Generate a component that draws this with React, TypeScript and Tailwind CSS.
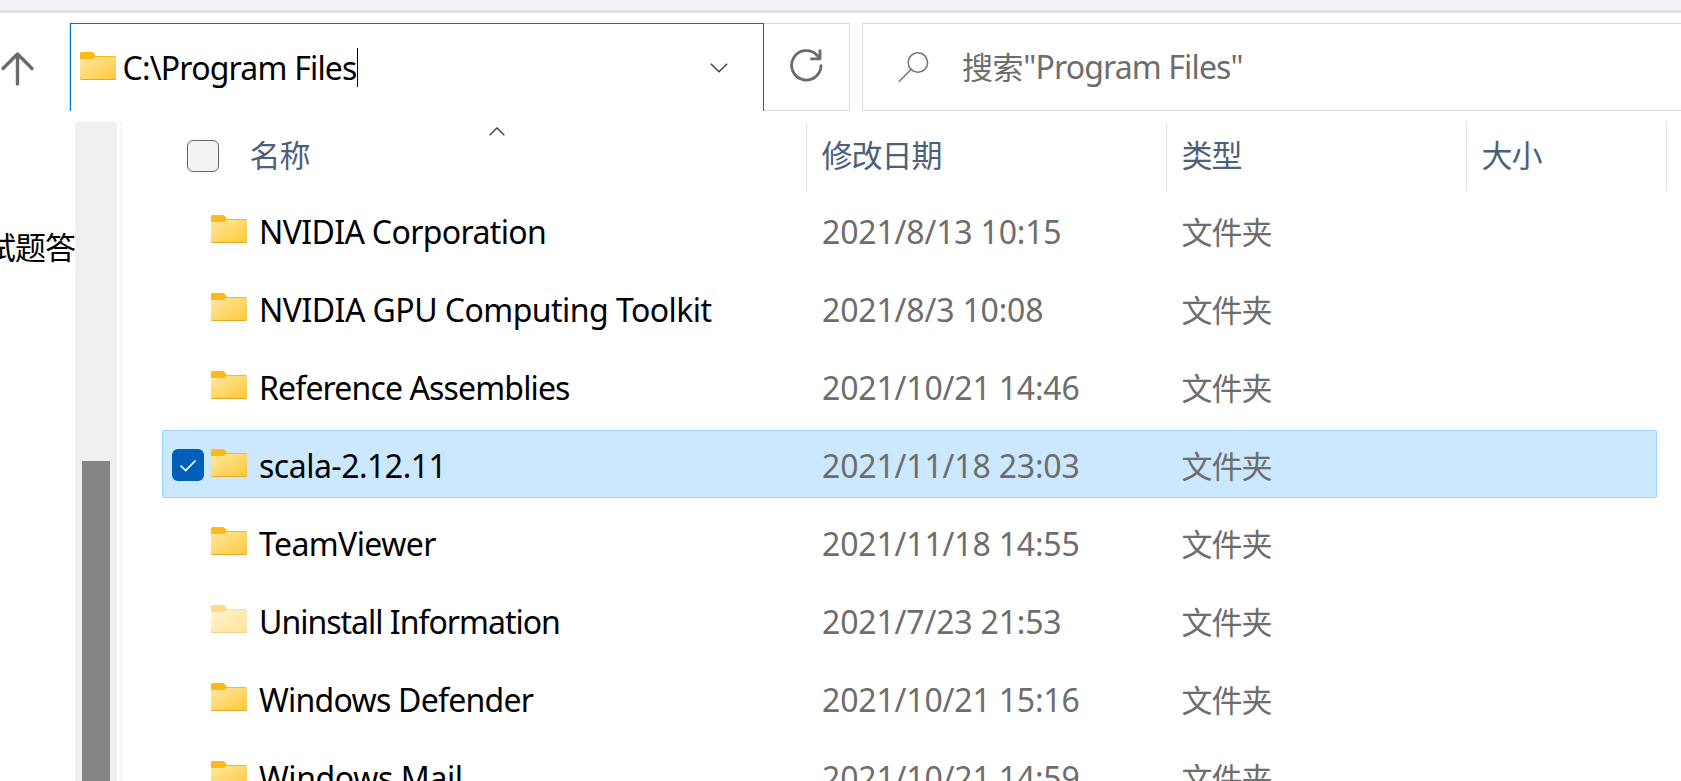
const rows = [
  { name: "NVIDIA Corporation", date: "2021/8/13 10:15", track: "tracking-[-0.64px]" },
  { name: "NVIDIA GPU Computing Toolkit", date: "2021/8/3 10:08", track: "tracking-[-0.54px]" },
  { name: "Reference Assemblies", date: "2021/10/21 14:46", track: "tracking-[-0.86px]" },
  { name: "scala-2.12.11", date: "2021/11/18 23:03", track: "tracking-[-0.5px]", selected: true },
  { name: "TeamViewer", date: "2021/11/18 14:55", track: "tracking-[-0.6px]" },
  { name: "Uninstall Information", date: "2021/7/23 21:53", track: "tracking-[-1px]", faded: true },
  { name: "Windows Defender", date: "2021/10/21 15:16", track: "tracking-[-0.74px]" },
  { name: "Windows Mail", date: "2021/10/21 14:59", track: "tracking-[-0.4px]" },
];

function Folder({ faded }: { faded?: boolean }) {
  return (
    <svg width="36" height="28" viewBox="0 0 36 28" className={faded ? "shrink-0 opacity-50" : "shrink-0"}>
      <defs>
        <linearGradient id="folderFront" x1="0" y1="0" x2="1" y2="1">
          <stop offset="0" stopColor="#ffe8a2" />
          <stop offset="1" stopColor="#ffc937" />
        </linearGradient>
      </defs>
      <path d="M0 1.5Q0 0 1.5 0H11.5Q13 0 14 1.2L15.8 4H34.5Q36 4 36 5.5V9H0Z" fill="#fcb91a" />
      <path d="M0 7H12Q13.3 7 14.2 6.2L15.5 5H35.3Q36 5 36 6V26.5Q36 28 34.5 28H1.5Q0 28 0 26.5Z" fill="url(#folderFront)" />
      <path d="M0 26.2Q0 27.5 1.5 27.5H34.5Q36 27.5 36 26.2" fill="none" stroke="#e9a820" strokeWidth="1" />
    </svg>
  );
}

function Column({ title, className }: { title: string; className: string }) {
  return (
    <div className={`shrink-0 border-l border-[#e2e2e2] pt-[11px] pl-[14.5px] leading-[44px] ${className}`}>{title}</div>
  );
}

export default function App() {
  return (
    <div className="flex h-[781px] w-[1681px] flex-col overflow-hidden bg-white font-['Noto_Sans','Noto_Sans_CJK_SC',sans-serif] text-[32px] whitespace-pre text-black">
      <div className="h-[13px] shrink-0 border-b-[3px] border-[#dfe2e8] bg-[#f0f3f8]" />

      <div className="flex h-[98px] shrink-0 pt-[10px]">
        <div className="w-[69px] shrink-0 pt-[28px]">
          <svg width="36" height="36" viewBox="0 0 36 36" fill="none" stroke="#6b6b6b" strokeWidth="3.4" strokeLinecap="round" strokeLinejoin="round">
            <path d="M17.5 33V3.2M3 17.5L17.5 3L32 17.5" />
          </svg>
        </div>
        <div className="flex w-[695px] shrink-0 border-l border-[#d9e3ea]">
          <div className="flex flex-1 border-x border-t border-[#0073cf] pl-[9px]">
            <div className="pt-[28px]">
              <Folder />
            </div>
            <div className="mt-[23px] ml-[6.5px] h-[42px] text-[32px] leading-[42px] tracking-[-0.8px]">C:\Program Files</div>
            <div className="mt-[24px] h-[39px] w-px bg-black" />
            <svg width="18" height="10" viewBox="0 0 18 10" fill="none" stroke="#444" strokeWidth="1.5" className="mt-[39px] mr-[35px] ml-auto">
              <path d="M0.8 0.8L9 8.8L17.2 0.8" />
            </svg>
          </div>
        </div>
        <div className="w-[86px] shrink-0 border-y border-r border-[#d9d9d9] pt-[24px] pl-[25.5px]">
          <svg width="34" height="34" viewBox="0 0 34 34" fill="none" stroke="#6b6b6b" strokeWidth="2.8" strokeLinejoin="round">
            <path d="M31 16.5A14.7 14.7 0 1 1 27 7.2L30 10.5" />
            <path d="M30 1.5V10.8H20.3" />
          </svg>
        </div>
        <div className="ml-[12px] flex flex-1 border-y border-l border-[#d9d9d9] pl-[35px] text-[#6d6d6d]">
          <svg width="31" height="31" viewBox="0 0 31 31" fill="none" stroke="#777" strokeWidth="1.6" className="mt-[28px]">
            <circle cx="19.9" cy="10.5" r="9.7" />
            <path d="M13 17.5L0.8 29.7" />
          </svg>
          <div className="mt-[22px] ml-[33px] h-[42px] text-[32px] leading-[42px]">
            <span className="text-[31px] tracking-[-0.4px]">搜索</span>
            <span className="tracking-[-0.85px]">"Program Files"</span>
          </div>
        </div>
      </div>

      <div className="flex min-h-0 flex-1 pt-[11px]">
        <div className="flex w-[75px] shrink-0 justify-end overflow-hidden pt-[103px] text-[31px] leading-[44px] tracking-[-1px]">
          <span>试题答</span>
        </div>
        <div className="w-[42px] shrink-0 bg-[#f0f0f0] pt-[339px]">
          <div className="ml-[7px] h-full w-[28px] bg-[#858585]" />
        </div>
        <div className="ml-[3px] w-[3px] shrink-0 bg-[#f7f7f7]" />

        <div className="flex flex-1 flex-col pl-[39px]">
          <div className="flex h-[69px] shrink-0 text-[31px] tracking-[-1px] text-[#4c607a]">
            <div className="relative flex w-[644px] shrink-0 pl-[25px]">
              <div className="mt-[18px] h-[32px] w-[32px] rounded-[6px] border border-[#666] bg-[#f3f3f3]" />
              <div className="ml-[30.5px] pt-[11px] leading-[44px]">名称</div>
              <svg width="16" height="9" viewBox="0 0 16 9" fill="none" stroke="#444" strokeWidth="1.4" className="absolute top-[5px] left-[326.5px]">
                <path d="M0.7 8.2L8 0.9L15.3 8.2" />
              </svg>
            </div>
            <Column title="修改日期" className="w-[360px]" />
            <Column title="类型" className="w-[300px]" />
            <Column title="大小" className="w-[200px]" />
            <Column title="" className="w-[10px]" />
          </div>

          <div className="mt-[5px] flex flex-col gap-[10px]">
            {rows.map((r) => (
              <div
                key={r.name}
                className={`flex h-[68px] w-[1495px] shrink-0 items-start rounded-[2px] border pl-[9px] leading-[44px] ${r.selected ? "border-[#99d1ff] bg-[#cce8ff]" : "border-transparent"}`}
              >
                <div className="mt-[18px] mr-[7px] h-[32px] w-[32px] shrink-0">
                  {r.selected && (
                    <svg width="32" height="32" viewBox="0 0 32 32" fill="none">
                      <rect width="32" height="32" rx="6" fill="#005fb8" />
                      <path d="M8.5 16.5L13.7 21.5L23.5 11.5" stroke="#fff" strokeWidth="1.7" />
                    </svg>
                  )}
                </div>
                <div className="mt-[18px] flex shrink-0">
                  <Folder faded={r.faded} />
                </div>
                <div className={`mt-[13px] ml-[12px] w-[563px] shrink-0 ${r.track}`}>{r.name}</div>
                <div className="mt-[13px] w-[359.5px] shrink-0 tracking-[-0.17px] text-[#6d6d6d]">{r.date}</div>
                <div className="mt-[13px] shrink-0 text-[31px] tracking-[-1px] text-[#6d6d6d]">文件夹</div>
              </div>
            ))}
          </div>
        </div>
      </div>
    </div>
  );
}
